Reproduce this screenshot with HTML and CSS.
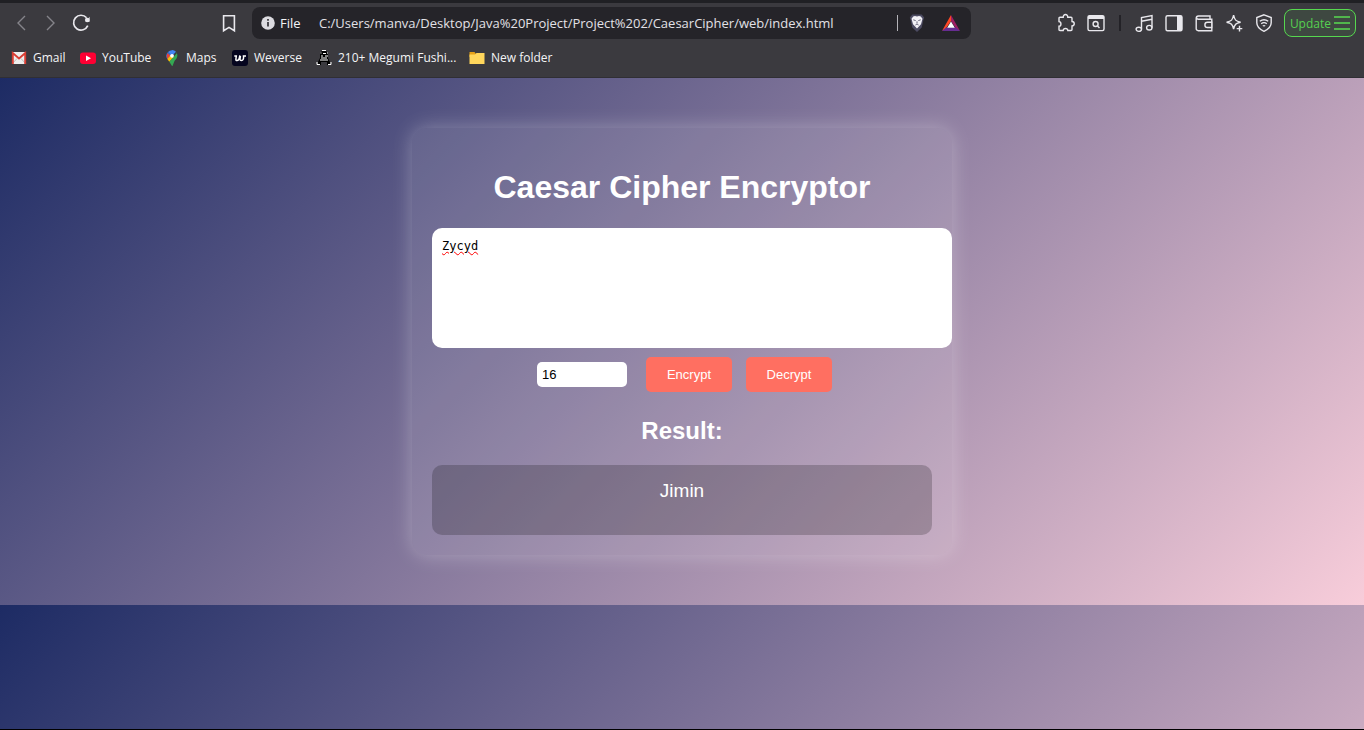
FILE: index.html
```html
<!DOCTYPE html>
<html lang="en">
<head>
<meta charset="utf-8">
<title>Caesar Cipher Encryptor</title>
<link rel="stylesheet" href="styles.css">
</head>
<body>
<header class="browser">
  <div class="toolbar">
    <div class="nav">
      <button class="icon-btn dim" aria-label="Back"><svg width="20" height="20" viewBox="0 0 20 20"><path d="M14 3 7 10l7 7"/></svg></button>
      <button class="icon-btn dim" aria-label="Forward"><svg width="20" height="20" viewBox="0 0 20 20"><path d="M6 3l7 7-7 7"/></svg></button>
      <button class="icon-btn" aria-label="Reload"><svg width="20" height="20" viewBox="0 0 20 20"><path d="M16.800 12.600A7.400 7.400 0 1 1 15.600 4.800" stroke-width="1.700"/><circle cx="16.200" cy="7" r="2.300" class="fill"/><path d="M18.600 3.800v5h-4z" class="fill"/></svg></button>
    </div>
    <button class="icon-btn" aria-label="Bookmark this page"><svg width="20" height="20" viewBox="0 0 20 20"><path d="M4.600 2.800h10.800v15L10 14.400l-5.400 3.400z" stroke-width="1.600"/></svg></button>
    <div class="address">
      <svg class="info" width="14" height="14" viewBox="0 0 14 14"><circle cx="7" cy="7" r="6.800" fill="#dcdbe0"/><path d="M7 6v4.500M7 3v1.700" stroke="#26252a" stroke-width="1.600"/></svg>
      <label for="url">File</label>
      <input id="url" class="url" type="text" value="C:/Users/manva/Desktop/Java%20Project/Project%202/CaesarCipher/web/index.html">
      <span class="divider"></span>
      <button class="icon-btn" aria-label="Shields"><svg width="20" height="20" viewBox="0 0 20 20"><path d="M5.400 1.400h9.200l2.600 3.200-.7 2-1.800 8L10 19l-4.700-4.400-1.800-8-.7-2z" fill="#4c4b62" stroke="none"/><path d="M6.200 3.600 8 3l2 .5L12 3l1.800.6 1.700 2.100-1.500 5.600L10 15.600l-4-4.300-1.500-5.600z" fill="#f2f1f6" stroke="none"/><path d="M6.300 6.800l2.400.8M13.700 6.800l-2.400.8M10 8.400v2M8.400 12l1.600-1 1.600 1" stroke="#5b5a70" stroke-width=".9"/></svg></button>
      <button class="icon-btn" aria-label="Rewards"><svg width="20" height="20" viewBox="0 0 20 20"><g stroke="none"><path d="M10 2v6L4.800 15.500 1 18z" fill="#ff4724"/><path d="M10 2l9 16-4-2.500L10 8z" fill="#9e1f63"/><path d="M1 18l4-3.500h10l4 3.500z" fill="#662d91"/><path d="M10 8.500l3.800 6.300H6.200z" fill="#fff"/></g></svg></button>
    </div>
    <div class="actions">
      <button class="icon-btn" aria-label="Extensions"><svg width="20" height="20" viewBox="0 0 20 20"><path d="M3 5.300q0-1 1-1h3.200c-.2-3.800 4.800-3.800 4.600 0H15q1 0 1 1v3.200c3 .2 3 4.300 0 4.500v3.500q0 1-1 1h-3.200c-.2-2.700-4.400-2.700-4.600 0H4q-1 0-1-1V13.200c2.600-.2 2.600-4.400 0-4.600z"/></svg></button>
      <button class="icon-btn" aria-label="Search tabs"><svg width="20" height="20" viewBox="0 0 20 20"><rect x="2" y="2.600" width="16" height="15" rx="1.500"/><path d="M2 4.500h16" stroke-width="3"/><circle cx="9.600" cy="11" r="2.500"/><path d="M11.500 13l2 2"/></svg></button>
      <span class="separator"></span>
      <button class="icon-btn" aria-label="Playlist"><svg width="20" height="20" viewBox="0 0 20 20"><path d="M7.500 16.200V4.600L18 2.500v12.200M7.500 8.300 18 6.200"/><ellipse cx="4.800" cy="16.300" rx="2.700" ry="2.100"/><ellipse cx="15.300" cy="14.700" rx="2.700" ry="2.300"/></svg></button>
      <button class="icon-btn" aria-label="Sidebar"><svg width="20" height="20" viewBox="0 0 20 20"><rect x="2" y="2.700" width="16" height="15" rx="1.500"/><path d="M13 3h5v14.500h-5z" class="fill"/></svg></button>
      <button class="icon-btn" aria-label="Wallet"><svg width="20" height="20" viewBox="0 0 20 20"><path d="M16 6V3H4.500a2.300 2.300 0 0 0-2.300 2.300v10.400a2 2 0 0 0 2 2h13.600V6.200H4.500c-1.300 0-2-.5-2-1.400M18 9.300h-4.500a2.600 2.600 0 0 0 0 5.200H18z"/></svg></button>
      <button class="icon-btn" aria-label="Assistant"><svg width="20" height="20" viewBox="0 0 20 20"><path d="M9.600 2.200c1 4.800 2.200 6 7 7-4.800 1-6 2.200-7 7-1-4.800-2.200-6-7-7 4.800-1 6-2.200 7-7z"/><path d="M15.500 12.800v5.600M12.700 15.600h5.600"/></svg></button>
      <button class="icon-btn" aria-label="VPN"><svg width="20" height="20" viewBox="0 0 20 20"><path d="M10 1.800l7.200 2.700v5.300c0 4-3 6.600-7.200 8.500-4.200-1.900-7.200-4.500-7.200-8.500V4.500z"/><path d="M5.800 8.300c2.500-1.900 5.900-1.900 8.400 0M7.200 10.700c1.700-1.300 3.900-1.300 5.600 0M8.800 13c.8-.5 1.600-.5 2.400 0"/></svg></button>
      <button class="update">Update<svg width="16" height="16" viewBox="0 0 16 16"><path d="M0 2h16M0 8h16M0 14h16" stroke="#51b64c" stroke-width="2"/></svg></button>
    </div>
  </div>
  <nav class="bookmarks">
    <a href="#"><svg width="16" height="16" viewBox="0 0 16 16"><path d="M1 2h14v12H1z" fill="#eee"/><path d="M1 14 6 8.500M15 14l-5-5.500" stroke="#bbb"/><path d="M1.800 14V3L8 8.500 14.200 3v11" fill="none" stroke="#d93d33" stroke-width="1.900"/></svg>Gmail</a>
    <a href="#"><svg width="16" height="16" viewBox="0 0 16 16"><rect y="2.500" width="16" height="11.500" rx="3" fill="#ff0033"/><path d="M6 5.500 11 8.200 6 11z" fill="#fff"/></svg>YouTube</a>
    <a href="#"><svg width="16" height="16" viewBox="0 0 16 16"><path d="M3.300 9A5.400 5.400 0 0 1 4 2l4 4z" fill="#1a73e8"/><path d="M4 2a5.400 5.400 0 0 1 8-.2L8 6z" fill="#4285f4"/><path d="M3.500 3 6.500 5.600 3.300 9A6 6 0 0 1 3.500 3z" fill="#ea4335"/><path d="M6 6 3.300 9l2 2.800L10 7z" fill="#fbbc04"/><path d="M12 1.800c3 4 .5 7-1.500 9.200L8.500 16H8l-2.700-4.200L13 3z" fill="#34a853"/><circle cx="8" cy="5.800" r="1.900" fill="#fff"/></svg>Maps</a>
    <a href="#"><svg width="16" height="16" viewBox="0 0 16 16"><rect width="16" height="16" rx="3" fill="#05051f"/><path d="M2.300 6h2L3.900 9.200Q3.800 10.600 5 10.600C6.800 10.600 7.500 8 7.800 5.400M8.400 6 8 9.200Q8 10.600 9.300 10.600C11.300 10.600 11.800 8.500 11.500 6H14" fill="none" stroke="#fff" stroke-width="1.500"/></svg>Weverse</a>
    <a href="#"><svg width="16" height="16" viewBox="0 0 16 16"><path d="M6 1h4l2 2v5l2 4v3h-3v-3H5v3H2v-3l2-4V3z" fill="#000"/><path d="M6 .500h4M4.500 3h1M11 3h1M7 3.500h3M5 6h2M9 6h3M5 8h6M4 10h8M1 12v2.500h3M15 12v2.500h-3" fill="none" stroke="#fff"/></svg>210+ Megumi Fushi...</a>
    <a href="#"><svg width="16" height="16" viewBox="0 0 16 16"><path d="M.500 2h5l1.500 2v3H.500z" fill="#e6a117"/><path d="M.500 4.500H6L7.500 3H15.500v11H.500z" fill="#ffd65c"/></svg>New folder</a>
  </nav>
</header>
<main class="page">
  <section class="card">
    <h1>Caesar Cipher Encryptor</h1>
    <textarea class="message" aria-label="Message" spellcheck="false">Zycyd</textarea>
    <div class="controls">
      <input class="shift" type="number" value="16" aria-label="Shift">
      <button class="action">Encrypt</button>
      <button class="action">Decrypt</button>
    </div>
    <h2>Result:</h2>
    <div class="result">Jimin</div>
  </section>
</main>
</body>
</html>
```
FILE: styles.css
```css
* { box-sizing: border-box; }

body {
  margin: 0;
  min-height: 100vh;
  display: flex;
  flex-direction: column;
  font-family: "Liberation Sans", Arial, sans-serif;
  border-bottom: 1px solid #000;
}

button, input, textarea { font: inherit; border: none; outline: none; }
button { padding: 0; cursor: pointer; }

.browser {
  background: #3b3a3f;
  border-top: 3px solid #202024;
  border-bottom: 1px solid #302f34;
  color: #f4f4f6;
  font-family: "Open Sans", "Noto Sans", sans-serif;
  padding-bottom: 11px;
}

.toolbar {
  display: flex;
  align-items: center;
  padding: 4px 8px 0 11px;
}

.nav { display: flex; gap: 10px; margin-right: 128px; }

.icon-btn {
  display: flex;
  flex: none;
  background: none;
  color: #e9e8ed;
}

.icon-btn svg {
  fill: none;
  stroke: currentColor;
  stroke-width: 1.4;
}

.icon-btn .fill { fill: currentColor; stroke: none; }
.dim { color: #85848a; }

.address {
  display: flex;
  align-items: center;
  flex: 1;
  height: 32px;
  margin: 0 85px 0 13px;
  padding: 0 10px 0 9px;
  border-radius: 8px;
  background: #252429;
  font-size: 13px;
}

.address label { width: 39px; margin-left: 5px; }
.info { flex: none; }

.url {
  flex: 1;
  min-width: 0;
  padding: 0;
  background: none;
  color: #e2e1e6;
}

.divider { width: 1px; height: 16px; background: #b4b3b8; margin-right: 9px; }
.address .icon-btn + .icon-btn { margin-left: 14px; }

.actions { display: flex; align-items: center; gap: 10px; }
.separator { width: 2px; height: 16px; margin: 0 3px; background: #232227; }

.update {
  display: flex;
  align-items: center;
  gap: 3px;
  height: 28px;
  padding: 0 5px;
  border: 1px solid #56d84f;
  border-radius: 8px;
  background: #3e4841;
  color: #56cf50;
  font-size: 12px;
}

.bookmarks {
  display: grid;
  grid-template-columns: 69px 84px 68px 84px 153px auto;
  padding: 11px 11px 0;
  font-size: 12px;
  line-height: 16px;
}

.bookmarks a {
  display: flex;
  gap: 6px;
  color: inherit;
  text-decoration: none;
  white-space: nowrap;
}

.bookmarks svg { flex: none; }

.page {
  flex: 1;
  padding: 50px 0;
  background: linear-gradient(135deg, #1d2b64, #f8cdda) 0 0 / 100% 527px;
  color: #fff;
  text-align: center;
}

.card {
  max-width: 540px;
  margin: 0 auto;
  padding: 20px;
  border-radius: 15px;
  background: rgba(255, 255, 255, 0.1);
  box-shadow: 0 0 20px rgba(255, 255, 255, 0.3);
}

h1 { margin: 20px 0 22px; font-size: 32px; line-height: 38px; }

.message {
  display: block;
  width: calc(100% + 20px);
  height: 120px;
  padding: 10px;
  border-radius: 10px;
  background: #fff;
  color: #000;
  font-family: "DejaVu Sans Mono", monospace;
  font-size: 12px;
  line-height: 16px;
  resize: none;
  text-decoration: underline wavy #f00 1px;
}

.controls {
  display: flex;
  justify-content: center;
  align-items: center;
  gap: 14px;
  padding: 9px 0 0 5px;
}

.shift {
  width: 90px;
  height: 25px;
  margin-right: 5px;
  padding: 5px;
  border-radius: 5px;
  background: #fff;
  font-size: 13px;
}

.action {
  min-width: 86px;
  height: 35px;
  padding: 0 20px;
  border-radius: 5px;
  background: #ff6f61;
  color: #fff;
  font-size: 13px;
}

h2 { margin: 25px 0 20px; font-size: 24px; line-height: 28px; }

.result {
  min-height: 70px;
  padding: 15px 10px;
  border-radius: 10px;
  background: rgba(0, 0, 0, 0.2);
  font-size: 19px;
  line-height: 22px;
}
```
